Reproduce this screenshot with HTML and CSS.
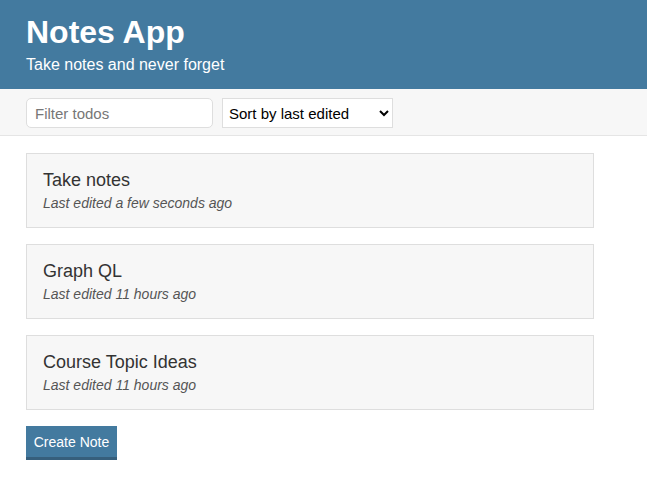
FILE: index.html
```html
<!DOCTYPE html>
<html lang="en">
<head>
<meta charset="utf-8">
<title>Notes App</title>
<link rel="stylesheet" href="styles.css">
</head>
<body>
<header class="header">
  <h1 class="title">Notes App</h1>
  <p class="subtitle">Take notes and never forget</p>
</header>
<div class="toolbar">
  <input class="filter" type="text" placeholder="Filter todos">
  <select class="sort">
    <option>Sort by last edited</option>
    <option>Sort by recently created</option>
    <option>Sort alphabetically</option>
  </select>
</div>
<main class="content">
  <div class="note">
    <p class="note-title">Take notes</p>
    <p class="note-meta">Last edited a few seconds ago</p>
  </div>
  <div class="note">
    <p class="note-title">Graph QL</p>
    <p class="note-meta">Last edited 11 hours ago</p>
  </div>
  <div class="note">
    <p class="note-title">Course Topic Ideas</p>
    <p class="note-meta">Last edited 11 hours ago</p>
  </div>
  <div class="actions">
    <button class="btn">Create Note</button>
  </div>
</main>
</body>
</html>
```
FILE: styles.css
```css
* { box-sizing: border-box; }
html, body { margin: 0; padding: 0; background: #fff; }
body { font-family: "Liberation Sans", Arial, sans-serif; color: #333; }

.header {
  background: #437a9f;
  color: #fff;
  padding: 14px 26px 0;
  height: 89px;
}
.title {
  margin: 0;
  font-size: 32px;
  font-weight: 700;
  line-height: 37px;
}
.subtitle {
  margin: 5px 0 0;
  font-size: 16px;
  line-height: 18px;
}

.toolbar {
  background: #f7f7f7;
  border-bottom: 1px solid #e5e5e5;
  display: flex;
  align-items: center;
  gap: 9px;
  padding: 9px 26px 7px;
  height: 47px;
}
.filter {
  width: 187px;
  height: 30px;
  border: 1px solid #dedede;
  border-radius: 5px;
  background: #fff;
  padding: 0 8px;
  font-family: "Liberation Sans", Arial, sans-serif;
  font-size: 15px;
  color: #333;
  outline: none;
}
.filter::placeholder { color: #777; }
.sort {
  width: 171px;
  height: 30px;
  border: 1px solid #dedede;
  border-radius: 0;
  background: #fff;
  padding: 0 2px;
  font-family: "Liberation Sans", Arial, sans-serif;
  font-size: 15px;
  color: #000;
}

.content {
  padding: 17px 26px 0;
  display: flex;
  flex-direction: column;
  gap: 16px;
}
.note {
  width: 568px;
  height: 75px;
  background: #f7f7f7;
  border: 1px solid #dedede;
  padding: 16px 16px 0;
}
.note-title {
  margin: 0;
  font-size: 18px;
  line-height: 21px;
  color: #333;
}
.note-meta {
  margin: 4px 0 0;
  font-size: 14px;
  line-height: 16px;
  font-style: italic;
  color: #555;
}
.actions { display: flex; }
.btn {
  background: #437a9f;
  color: #fff;
  border: none;
  border-bottom: 3px solid #365f7c;
  height: 34px;
  width: 91px;
  padding: 0;
  font-family: "Liberation Sans", Arial, sans-serif;
  font-size: 14px;
  cursor: pointer;
}
```
